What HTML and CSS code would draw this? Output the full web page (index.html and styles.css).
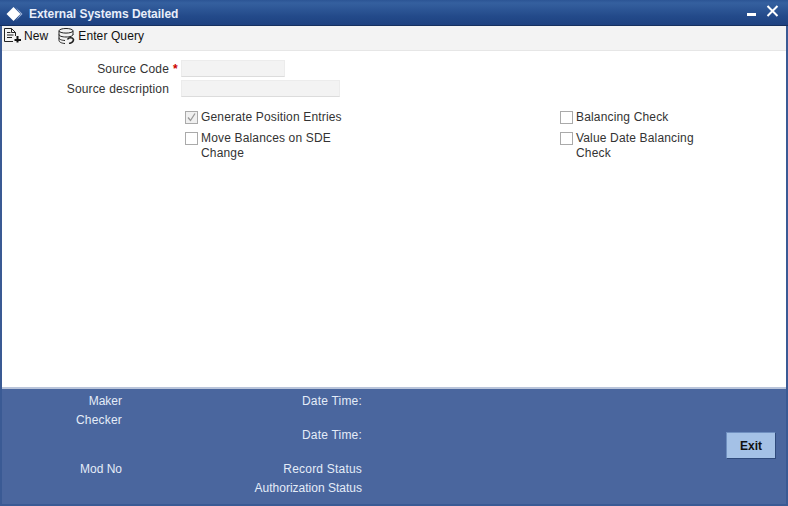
FILE: index.html
```html
<!DOCTYPE html>
<html lang="en">
<head>
<meta charset="utf-8">
<title>External Systems Detailed</title>
<link rel="stylesheet" href="styles.css">
</head>
<body>
<div class="window">
  <header class="titlebar">
    <div class="title-left">
      <svg class="logo" width="18" height="16" viewBox="0 0 18 16"><path d="M7.500 1 14.500 8 7.500 15 .5 8Z" fill="#fff"/><path d="M9.500 1 16.500 8 9.500 15 14.800 8Z" fill="#9fb4d8"/></svg>
      <span class="title">External Systems Detailed</span>
    </div>
    <div class="win-controls">
      <span class="minimize"></span>
      <svg class="close" width="13" height="12" viewBox="0 0 13 12"><path d="M1.500 1 11.500 11M11.500 1 1.500 11" stroke="#fff" stroke-width="2" fill="none"/></svg>
    </div>
  </header>
  <nav class="toolbar">
    <span class="tool">
      <svg width="18" height="15" viewBox="0 0 18 15"><path d="M.5 13.500V.5H7.500L11.500 4.500V8M7.500 .5V4.500H11.500M3 4.500H6.500M3 7H9.500M3 9.500H8M.5 13.500H9" fill="none" stroke="#222" stroke-width="1"/><path d="M13.500 8V14.500M10.500 12H17" stroke="#111" stroke-width="2" fill="none"/></svg>
      <span>New</span>
    </span>
    <span class="tool query">
      <svg width="17" height="16" viewBox="0 0 17 16"><ellipse cx="8" cy="2.800" rx="7" ry="2.300" fill="none" stroke="#222"/><path d="M1 3V12.500C1 14 3.500 15.300 7 15.500M15 3V7M1 6.500C1 8 4 9 8 9S15 8 15 6.500M1 9.800C1 11.300 3.500 12.300 7 12.500" fill="none" stroke="#222"/><path d="M9.500 11.500C10.500 9.500 14.500 9 15.500 11.500C15.500 13.800 13.500 15 11 15.500" fill="none" stroke="#222" stroke-width="1.600"/></svg>
      <span>Enter Query</span>
    </span>
  </nav>
  <main class="content">
    <div class="fields">
      <div class="field">
        <label class="field-label">Source Code<span class="req">*</span></label>
        <input class="input short" type="text" disabled>
      </div>
      <div class="field desc">
        <label class="field-label">Source description</label>
        <input class="input long" type="text" disabled>
      </div>
    </div>
    <div class="checks">
      <div class="check-col left-col">
        <div class="check first">
          <span class="box checked"><svg width="11" height="11" viewBox="0 0 11 11"><path d="M2 5.500 4.500 8.500 9 1.500" fill="none" stroke="#999" stroke-width="1.300"/></svg></span>
          <span>Generate Position Entries</span>
        </div>
        <div class="check">
          <span class="box"></span>
          <span>Move Balances on SDE Change</span>
        </div>
      </div>
      <div class="check-col right-col">
        <div class="check first">
          <span class="box"></span>
          <span>Balancing Check</span>
        </div>
        <div class="check">
          <span class="box"></span>
          <span>Value Date Balancing Check</span>
        </div>
      </div>
    </div>
  </main>
  <footer class="footer">
    <div class="audit">
      <div class="audit-col c1">
        <div class="row">Maker</div>
        <div class="row wide">Checker</div>
        <div class="row gap">Mod No</div>
      </div>
      <div class="audit-col c2">
        <div class="row wide">Date Time:</div>
        <div class="row dt2 wide">Date Time:</div>
        <div class="row rs wide">Record Status</div>
        <div class="row">Authorization Status</div>
      </div>
    </div>
    <button class="exit" type="button">Exit</button>
  </footer>
</div>
</body>
</html>
```
FILE: styles.css
```css
* { box-sizing: border-box; }
html, body { margin: 0; padding: 0; }
body {
  width: 788px;
  height: 506px;
  overflow: hidden;
  font-family: "Liberation Sans", Arial, sans-serif;
  font-size: 12px;
  color: #333;
}
.window {
  width: 788px;
  height: 506px;
  display: flex;
  flex-direction: column;
  background: #fff;
  border-left: 2px solid #3a5a94;
  border-right: 2px solid #3a5a94;
  border-bottom: 2px solid #3a5a94;
}
.titlebar {
  height: 26px;
  margin: 0 -2px;
  padding: 2px 9px 0 6px;
  display: flex;
  align-items: center;
  justify-content: space-between;
  background: linear-gradient(#2c5595, #35609f 12%, #234a8a 65%, #1e4180);
  border-bottom: 1px solid #16305f;
}
.title-left { display: flex; align-items: center; gap: 5px; }
.title { color: #e8eefa; font-weight: bold; font-size: 12px; letter-spacing: -.03px; }
.win-controls { display: flex; align-items: flex-start; gap: 10px; height: 100%; padding-top: 3px; }
.minimize { width: 9px; height: 3px; background: #fff; margin-top: 8px; }
.toolbar {
  height: 25px;
  padding: 0 0 5px 2px;
  display: flex;
  align-items: center;
  background: #f3f3f3;
  border-bottom: 1px solid #e6e6e6;
  color: #111;
  letter-spacing: .1px;
}
.tool { display: flex; align-items: center; gap: 2px; }
.query { margin-left: 10px; gap: 3px; }
.content { flex: 1; position: relative; padding-top: 9px; letter-spacing: .16px; }
.field { display: flex; align-items: center; height: 17px; }
.desc { margin-top: 3px; }
.field-label { position: relative; width: 167px; text-align: right; white-space: pre; }
.req { position: absolute; left: 171px; top: 0; color: #c00; font-weight: bold; }
.input {
  height: 17px;
  margin: 0 0 0 12px;
  padding: 0;
  border: 1px solid #ececec;
  border-bottom-color: #dcdcdc;
  background: #f3f3f3;
}
.short { width: 104px; }
.long { width: 159px; }
.checks { display: flex; margin-top: 13px; }
.check-col { width: 170px; }
.left-col { margin-left: 183px; }
.right-col { width: 150px; margin-left: 205px; }
.check { display: flex; gap: 3px; line-height: 15px; margin-top: 6px; }
.check.first { margin-top: 0; }
.box {
  flex: none;
  width: 13px;
  height: 13px;
  margin-top: 1px;
  border: 1px solid #aaa;
  background: #fff;
  display: flex;
  align-items: center;
  justify-content: center;
}
.checked { background: #f0f0f0; }
.footer {
  height: 117px;
  flex: none;
  position: relative;
  display: flex;
  justify-content: space-between;
  background: #4a669e;
  border-top: 2px solid #b9c4da;
  color: #e4ecf8;
}
.audit { display: flex; }
.audit-col { text-align: right; padding-top: 5px; }
.c1 { width: 120px; }
.c2 { width: 240px; }
.row { height: 15px; line-height: 15px; margin-bottom: 4px; }
.wide { letter-spacing: .2px; }
.gap { margin-top: 34px; }
.dt2 { margin-top: 19px; }
.rs { margin-top: 19px; }
.exit {
  width: 50px;
  height: 27px;
  margin: 43px 10px 0 0;
  padding: 0;
  background: #a4c1e6;
  border: 1px solid #6f8fc0;
  border-right-color: #2f4a7c;
  border-bottom-color: #2f4a7c;
  color: #111;
  font: bold 12px "Liberation Sans", Arial, sans-serif;
}
```
